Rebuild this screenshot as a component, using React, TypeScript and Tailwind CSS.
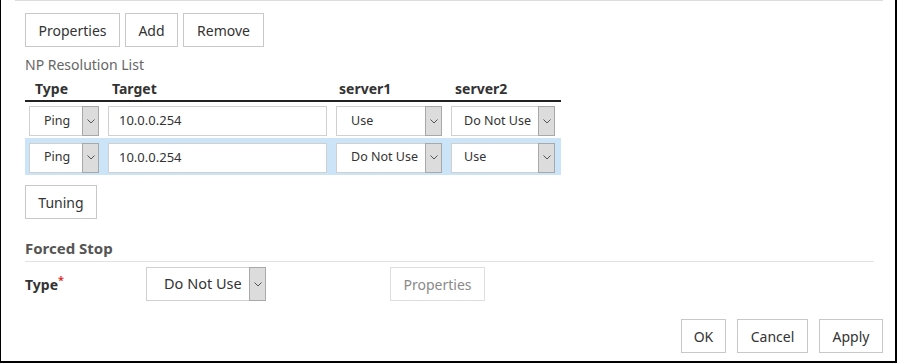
import React from 'react';

const font = { fontFamily: '"Noto Sans", "Open Sans", sans-serif' };

const Chevron: React.FC = () => (
  <svg width="8" height="5" viewBox="0 0 8 5" className="text-[#555]">
    <polyline points="0.5,0.5 4,4 7.5,0.5" fill="none" stroke="currentColor" strokeWidth="1" />
  </svg>
);

interface SelectProps {
  value: string;
  className: string;
  textClass?: string;
}

const Select: React.FC<SelectProps> = ({ value, className, textClass = 'text-[12.5px] pl-[14px]' }) => (
  <div className={`flex items-stretch bg-white border border-[#d0d0d0] ${className}`}>
    <div className={`flex-1 flex items-center text-[#333] whitespace-nowrap overflow-hidden ${textClass}`}>{value}</div>
    <div className="w-[17px] -my-px -mr-px flex items-center justify-center bg-[#dcdcdc] border border-[#a8a8a8]">
      <Chevron />
    </div>
  </div>
);

const Button: React.FC<{ label: string; className?: string; disabled?: boolean }> = ({ label, className = '', disabled }) => (
  <button
    className={`h-[34px] border bg-white text-[14px] flex items-center justify-center ${
      disabled ? 'border-[#dedede] text-[#8a8a8a]' : 'border-[#c8c8c8] text-[#333]'
    } ${className}`}
  >
    {label}
  </button>
);

const rows = [
  { type: 'Ping', target: '10.0.0.254', s1: 'Use', s2: 'Do Not Use', selected: false },
  { type: 'Ping', target: '10.0.0.254', s1: 'Do Not Use', s2: 'Use', selected: true },
];

export default function App() {
  return (
    <div
      style={font}
      className="w-[897px] h-[363px] bg-white border-l border-r-2 border-b-2 border-black flex flex-col overflow-hidden"
    >
      <div className="ml-[14px] w-[868px] h-px bg-[#dcdcdc]" />

      <div className="pl-[24px] flex flex-col">
        <div className="mt-[12px] flex gap-[5px]">
          <Button label="Properties" className="w-[95px]" />
          <Button label="Add" className="w-[53px]" />
          <Button label="Remove" className="w-[81px]" />
        </div>

        <div className="mt-[8px] h-[20px] text-[14px] text-[#666] leading-[20px]">NP Resolution List</div>

        <table className="mt-[4px] w-[536px] border-collapse table-fixed">
          <colgroup>
            <col className="w-[79px]" />
            <col className="w-[228px]" />
            <col className="w-[115px]" />
            <col className="w-[114px]" />
          </colgroup>
          <thead>
            <tr className="border-b-2 border-[#222] text-left text-[14px] font-bold text-[#333]">
              <th className="h-[22px] pl-[10px] pb-[2px] leading-[18px]">Type</th>
              <th className="pl-[8px] pb-[2px] leading-[18px]">Target</th>
              <th className="pl-[7px] pb-[2px] leading-[18px]">server1</th>
              <th className="pl-[8px] pb-[2px] leading-[18px]">server2</th>
            </tr>
          </thead>
          <tbody>
            {rows.map((r, i) => (
              <tr key={i} className={r.selected ? 'bg-[#cce4f7]' : ''}>
                <td className="h-[37px] pl-[4px] pt-[2px]">
                  <Select value={r.type} className="w-[70px] h-[30px]" />
                </td>
                <td className="pl-[4px] pt-[2px]">
                  <div className="w-[219px] h-[30px] bg-white border border-[#d0d0d0] flex items-center pl-[10px] text-[13px] text-[#333]">
                    {r.target}
                  </div>
                </td>
                <td className="pl-[4px] pt-[2px]">
                  <Select value={r.s1} className="w-[106px] h-[30px]" />
                </td>
                <td className="pl-[4px] pt-[2px]">
                  <Select value={r.s2} className="w-[104px] h-[30px]" textClass="text-[12.5px] pl-[12px]" />
                </td>
              </tr>
            ))}
          </tbody>
        </table>

        <div className="mt-[10px] flex">
          <Button label="Tuning" className="w-[72px]" />
        </div>

        <div className="mt-[19px] w-[849px] border-b border-[#e2e2e2] pb-[3px] text-[15px] font-bold text-[#555] leading-[20px]">
          Forced Stop
        </div>

        <div className="mt-[5px] flex items-center">
          <div className="w-[121px] text-[14px] font-bold text-[#333] leading-[18px]">
            Type<span className="text-[#d9342b] align-super text-[11px] leading-none">*</span>
          </div>
          <Select
            value="Do Not Use"
            className="w-[120px] h-[34px]"
            textClass="text-[14.5px] pl-[17px]"
          />
          <Button label="Properties" className="ml-[124px] w-[95px]" disabled />
        </div>

        <div className="mt-[18px] mr-[12px] flex justify-end gap-[11px]">
          <Button label="OK" className="w-[45px]" />
          <Button label="Cancel" className="w-[71px]" />
          <Button label="Apply" className="w-[64px]" />
        </div>
      </div>
    </div>
  );
}
